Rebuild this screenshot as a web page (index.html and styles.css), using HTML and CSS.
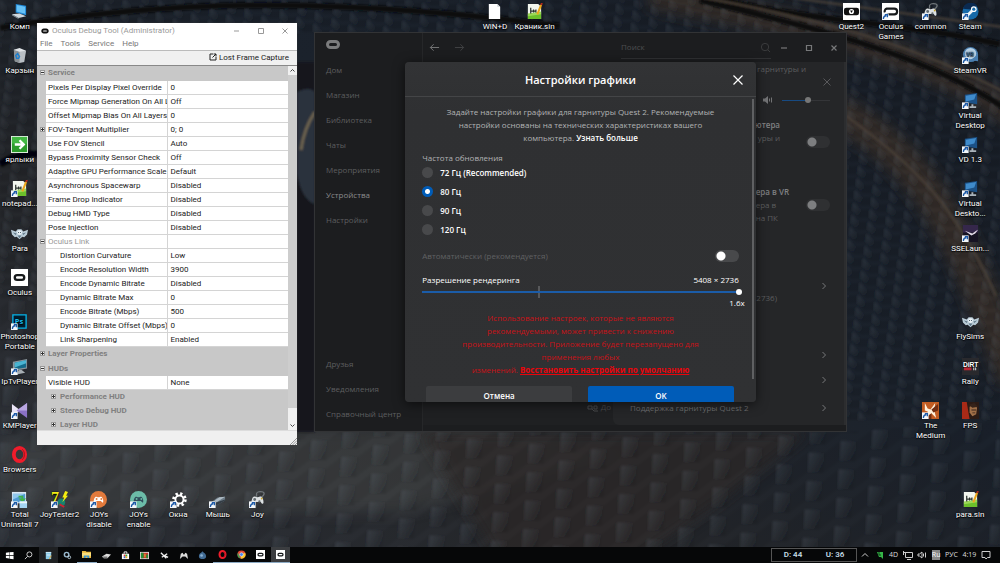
FILE: index.html
```html
<!DOCTYPE html>
<html lang="ru">
<head>
<meta charset="utf-8">
<meta name="viewport" content="width=device-width, initial-scale=1">
<title>Рабочий стол</title>
<link rel="stylesheet" href="styles.css">
</head>
<body>
<svg class="defs" aria-hidden="true">
  <symbol id="arrow" viewBox="0 0 18 18"><path fill="#f4f7fa" d="M0 11h7v7H0z"/><path fill="none" stroke="#1d5aa8" stroke-width="1.4" d="M1.500 17c0-2 1-3.500 3-3.500M3 12.300h2.700v2.900"/></symbol>
  <symbol id="i-pc" viewBox="0 0 18 18"><path fill="#1f88d8" d="M5 1l11 2v10L5 10z"/><path fill="#67c1f5" d="M6 2l9 2v7.500L6 9z"/><path fill="#cfd8de" d="M1 12l8-1 7 3-8 2z"/><path fill="#8d99a2" d="M1 12l7 4v1l-7-4z"/></symbol>
  <symbol id="i-bin" viewBox="0 0 18 18"><path fill="#b9bfc4" d="M3 3l13 1-2 12-5 1-5-2z"/><path fill="#8b9196" d="M3 3l6 2v12l-5-2z"/><path fill="#e1e5e8" d="M3 3l6-2 7 3-7 1z"/><path fill="none" stroke="#1b7fd0" stroke-width="1.500" d="M5 9l2-2 2 3-1 2H6z"/></symbol>
  <symbol id="i-green" viewBox="0 0 18 18"><path fill="#e5f1e5" d="M0 0h18v18H0z"/><path fill="#2c9c2c" d="M1 1h16v16H1z"/><path fill="#43b743" d="M1 1h16v7H1z"/><path fill="none" stroke="#fff" stroke-width="2.500" d="M4 9h9M9 4.500L13.500 9 9 13.500"/></symbol>
  <symbol id="i-sin" viewBox="0 0 18 18"><path fill="#f2f6ee" d="M2 1h11l3 3v13H2z"/><path fill="#6cc02b" d="M2 12l14-1v6H2z"/><path fill="#9bd957" d="M2 11l14-2v3L2 14z"/><path fill="none" stroke="#2b332d" stroke-width="1.300" d="M5 5v6M5 8.500h6M8 7v3M10.500 7v3"/><path stroke="#eba61c" stroke-width="2.200" d="M16 2l-4 10"/><path stroke="#b52b1e" stroke-width="2" d="M17 0l-1 2"/></symbol>
  <symbol id="i-wing" viewBox="0 0 18 18"><path fill="#b9cbd6" d="M0 5l5 2 2-2.500h4L13 7l5-2-1 5-3 3-2-.5L9 15l-3-2.500-2 .5-3-3z"/><path fill="#5d7484" d="M2 8l4 1-1 1.500zM16 8l-4 1 1 1.500zM7 11h4l-2 3z"/><circle cx="9" cy="8" r="2.500" fill="#ecf3f7"/><path fill="#415866" d="M7.500 7.500h1v1h-1zM9.500 7.500h1v1h-1z"/></symbol>
  <symbol id="i-oculus" viewBox="0 0 18 18"><path fill="#fff" d="M0 0h18v18H0z"/><rect x="4" y="6.500" width="10" height="5" rx="2.500" fill="none" stroke="#16191b" stroke-width="2.500"/></symbol>
  <symbol id="i-ps" viewBox="0 0 18 18"><path fill="#001d2e" stroke="#06b3e8" stroke-width="1.400" d="M2 2h14v14H2z"/><text x="4" y="12" class="svg-ps">Ps</text></symbol>
  <symbol id="i-tv" viewBox="0 0 18 18"><path fill="#89949b" d="M2 4l15-3v10L2 14z"/><path fill="#146a89" d="M4 5l12-2.500v7.500L4 12z"/><path fill="#4ab5d2" d="M4 5l12-2.500v3L4 10z"/><path fill="#a7aeb3" d="M8 13l3-.500 4 3-9 2z"/></symbol>
  <symbol id="i-km" viewBox="0 0 18 18"><path fill="#e9e4f5" d="M1 2l9 7-9 7z"/><path fill="#8a70c4" d="M17 1v16L6 9z"/><path fill="#b9a7e2" d="M17 1L6 9h11z"/></symbol>
  <symbol id="i-opera" viewBox="0 0 18 18"><ellipse cx="9" cy="9" rx="6" ry="7" fill="none" stroke="#ef1c2b" stroke-width="4"/><path fill="none" stroke="#9f1019" stroke-width="1" d="M12 3.500c3 3 3 8 0 11"/></symbol>
  <symbol id="i-total" viewBox="0 0 18 18"><path fill="#d9e7f2" d="M1 1h15v12H1z"/><path fill="#4f9ad2" d="M2 3h13v9H2z"/><path fill="#8fc7ec" d="M2 3h13L2 9z"/><path fill="#3fb14a" d="M8 5h5v3h3l-4 4-4-4h3V7H8z"/><path fill="#a4d4f3" d="M9 11h8v7H9z"/><path fill="#ecf6fb" d="M9 11h8v2H9z"/></symbol>
  <symbol id="i-seven" viewBox="0 0 18 18"><text x="0" y="13" class="svg-seven">7</text><circle cx="11" cy="12" r="4" fill="#18816d"/><path stroke="#cf2030" stroke-width="2" d="M9 14l5 3"/><path fill="#f5ee10" d="M15 0l3 1-2 4h2l-6 7 2-5h-2z"/></symbol>
  <symbol id="pad" viewBox="0 0 18 18"><path d="M4 5c2-1 2 .5 5 .5S12 4 14 5c2 1 3 6 2.500 8-.5 1.500-2 1-3.500-1.500H5C3.500 14 2 14.500 1.500 13 1 11 2 6 4 5z"/></symbol>
  <symbol id="i-joyd" viewBox="0 0 18 18"><circle cx="9" cy="9" r="9" fill="#e27a3c"/><use href="#pad" x="3" y="3" width="12" height="12" fill="#fff"/><circle cx="7" cy="8.500" r="1" fill="#e27a3c"/><circle cx="12" cy="8.500" r="1" fill="#e27a3c"/></symbol>
  <symbol id="i-joye" viewBox="0 0 18 18"><circle cx="9" cy="9" r="9" fill="#6cbca8"/><use href="#pad" x="3" y="3" width="12" height="12" fill="#304e5c"/><circle cx="7" cy="8.500" r="1" fill="#6cbca8"/><circle cx="12" cy="8.500" r="1" fill="#6cbca8"/></symbol>
  <symbol id="i-gear" viewBox="0 0 18 18"><circle cx="10" cy="9" r="6.200" fill="none" stroke="#fff" stroke-width="3" stroke-dasharray="2.400 2.470"/><circle cx="10" cy="9" r="4.300" fill="none" stroke="#fff" stroke-width="2"/></symbol>
  <symbol id="i-mouse" viewBox="0 0 18 18"><path fill="#6c7b86" d="M1 13l8-6 8-1v4L7 16z"/><path fill="#aebbc4" d="M6 10l5-3.500 6-.5-9 6z"/><path fill="#343d45" d="M2 14l15-5v1L7 16z"/></symbol>
  <symbol id="i-joy" viewBox="0 0 18 18"><path fill="none" stroke="#70767a" stroke-width="1.400" d="M8 6V3c0-3 8-3 8 0 0 2-2 2-3 4"/><use href="#pad" x="0" y="2" width="18" height="15" fill="#dde1e3"/><circle cx="6" cy="9" r="1.500" fill="#656d72"/><circle cx="11" cy="11" r="1.200" fill="#656d72"/><circle cx="13.500" cy="8" r="1" fill="#c5a431"/></symbol>
  <symbol id="i-doc" viewBox="0 0 18 18"><path fill="#fff" d="M3 1h9l3 3v13H3z"/><path fill="#cbd0d4" d="M12 1v3h3z"/></symbol>
  <symbol id="i-quest" viewBox="0 0 18 18"><path fill="#fff" d="M0 0h18v18H0z"/><rect x="1" y="5" width="16" height="8" rx="2.500" fill="#111"/><circle cx="9" cy="9" r="2.700" fill="#fff"/><path fill="#111" d="M7.500 8h3L9 10.500z"/></symbol>
  <symbol id="i-games" viewBox="0 0 18 18"><path fill="#fff" d="M0 0h18v18H0z"/><path fill="none" stroke="#16191b" stroke-width="2.300" d="M5 12H13a3 3 0 000-6H5a3 3 0 00-2 4"/></symbol>
  <symbol id="i-steam" viewBox="0 0 18 18"><circle cx="9" cy="9" r="8.500" fill="#176aa8"/><path fill="#0b2a50" d="M1 6a8.500 8.500 0 0115-3L9 7z"/><path fill="none" stroke="#eef4f8" stroke-width="3" d="M3 13l4-1 5-5"/><circle cx="12.500" cy="6.500" r="3" fill="#fff"/><circle cx="12.500" cy="6.500" r="1.700" fill="#176aa8"/></symbol>
  <symbol id="i-vr" viewBox="0 0 18 18"><circle cx="9" cy="8" r="8" fill="#4a7eaf"/><circle cx="9" cy="7" r="6" fill="#b8d2e6"/><text x="4.500" y="9.500" class="svg-vr">VR</text><path fill="#4a7eaf" d="M9 14l8-6v7z"/></symbol>
  <symbol id="i-vd" viewBox="0 0 18 18"><path fill="#1c5186" d="M3 3l13-2v12L3 11z"/><path fill="#3f8bcb" d="M4 4l11-2-2 6-9 2z"/><path fill="#a9b3bb" d="M10 13h2v2h3v2H8v-2h2z"/></symbol>
  <symbol id="i-sse" viewBox="0 0 18 18"><path fill="#171423" d="M1 0h16v18H1z"/><path fill="#35274b" d="M1 0h16v8H1z"/><path fill="#e3dbe8" d="M3 6l5 2 3 1 4-3 2-1-3 4-4 2-3-2z"/></symbol>
  <symbol id="i-dirt" viewBox="0 0 18 18"><path fill="#29292d" d="M0 0h18v18H0z"/><text x="1" y="10" class="svg-dirt">DiRT</text><path fill="#bb2836" d="M2 10h8v3H2z"/><path fill="#eee" d="M12 10h1v3h-1zM14 10h1v3h-1z"/></symbol>
  <symbol id="i-medium" viewBox="0 0 18 18"><path fill="#c25c22" d="M0 0h18v18H0z"/><path fill="#fff1dc" d="M3 1l3 6 3 1 5-7-1 8 2 8-5-5-3 3-1-5-3-1z"/><path fill="#712d12" d="M10 8l7-6v7l-5 2zM7 14l3-2v6H5z"/></symbol>
  <symbol id="i-fps" viewBox="0 0 18 18"><path fill="#2b1b15" d="M0 0h18v18H0z"/><path fill="#a92a17" d="M0 0h5l3 18H0z"/><path fill="#a07048" d="M8 5l5-2 3 3-1 7-4 2-3-4z"/><path fill="#35231a" d="M7 3l6-2 4 4-6 1zM10 8h5v1h-5zM11 11h3v1h-3z"/></symbol>
</svg>

<main class="desktop">
  <svg class="wallpaper" viewBox="0 0 1000 563" preserveAspectRatio="xMidYMid slice" aria-hidden="true">
    <defs>
      <linearGradient id="base" x1="0" y1="1" x2="1" y2="0"><stop offset="0" stop-color="#2f333a"/><stop offset=".35" stop-color="#25272b"/><stop offset=".6" stop-color="#1b222c"/><stop offset="1" stop-color="#181e27"/></linearGradient>
      <linearGradient id="facet" x1="0" y1="0" x2="1" y2="1"><stop offset="0" stop-color="#75818f" stop-opacity=".2"/><stop offset="1" stop-color="#000" stop-opacity=".14"/></linearGradient>
      <pattern id="large" width="34" height="26" patternUnits="userSpaceOnUse" patternTransform="rotate(-20) skewX(-24)"><path fill="url(#facet)" d="M0 0l17 6v18L0 18z"/><path fill="#000" opacity=".08" d="M17 6L34 0v18l-17 6z"/></pattern>
      <pattern id="small" width="18" height="12" patternUnits="userSpaceOnUse" patternTransform="rotate(22) skewX(14)"><path fill="url(#facet)" d="M0 0l9 4v8L0 8z"/><path fill="#000" opacity=".12" d="M9 4l9-4v8l-9 4z"/></pattern>
      <filter id="soft" x="-20%" y="-20%" width="140%" height="140%"><feGaussianBlur stdDeviation="7"/></filter>
      <filter id="edge"><feGaussianBlur stdDeviation="1.300"/></filter>
    </defs>
    <path fill="url(#base)" d="M0 0h1000v563H0z"/>
    <path fill="#46484a" opacity=".55" filter="url(#soft)" d="M0 440l440-15 190 30-230 58H0z"/>
    <path fill="#2f2c29" opacity=".8" filter="url(#soft)" d="M420 432h390l-90 70-90 61H500z"/>
    <g filter="url(#soft)" fill="none" stroke="#352f2a">
      <path stroke-width="26" d="M650-5c120 25 260 45 370 125"/>
      <path stroke-width="34" d="M835 110c90 50 120 110 180 270"/>
    </g>
    <g filter="url(#edge)" fill="none">
      <path fill="url(#small)" d="M300 0h700v420H847V33H300zM0 0h314v33H0zM0 0h38v300H0z"/>
      <path fill="url(#large)" d="M0 300h314v132h533l153-12v143H0z"/>
      <path stroke="#08090b" stroke-width="6" d="M0 28C160 0 330-4 560 26M710-4c90 26 180 24 290 48M700 0c120 30 230 55 310 112"/>
      <path stroke="#494037" stroke-width="2" d="M700-3c130 24 220 50 310 98M780-4l230 32M846 116c70 50 110 90 150 180"/>
      <path fill="#16191d" d="M295 62h20v370h-20z"/>
      <path fill="#2b323c" d="M297 92q12-6 18 0v112q-13-4-18-30z"/>
      <path stroke="#6d634f" stroke-width="3" d="M301 150q3-22 14-38"/>
      <path stroke="#050607" stroke-width="7" d="M0 164q20-12 40-10"/>
    </g>
  </svg>

  <nav class="icons" aria-label="Рабочий стол">
    <a class="icon c1 r1" href="#"><svg><use href="#i-pc"/></svg><span>Комп</span></a>
    <a class="icon c1 r2" href="#"><svg><use href="#i-bin"/></svg><span>Карзын</span></a>
    <a class="icon c1 r4" href="#"><svg><use href="#i-green"/></svg><span>ярлыки</span></a>
    <a class="icon c1 r5" href="#"><svg><use href="#i-sin"/><use href="#arrow"/></svg><span>notepad...</span></a>
    <a class="icon c1 r6" href="#"><svg><use href="#i-wing"/></svg><span>Para</span></a>
    <a class="icon c1 r7" href="#"><svg><use href="#i-oculus"/></svg><span>Oculus</span></a>
    <a class="icon c1 r8" href="#"><svg><use href="#i-ps"/><use href="#arrow"/></svg><span>Photoshop Portable</span></a>
    <a class="icon c1 r9" href="#"><svg><use href="#i-tv"/><use href="#arrow"/></svg><span>IpTvPlayer</span></a>
    <a class="icon c1 r10" href="#"><svg><use href="#i-km"/><use href="#arrow"/></svg><span>KMPlayer</span></a>
    <a class="icon c1 r11" href="#"><svg><use href="#i-opera"/></svg><span>Browsers</span></a>
    <a class="icon c1 r12" href="#"><svg><use href="#i-total"/><use href="#arrow"/></svg><span>Total<br>Uninstall 7</span></a>
    <a class="icon c2 r12" href="#"><svg><use href="#i-seven"/><use href="#arrow"/></svg><span>JoyTester2</span></a>
    <a class="icon c3 r12" href="#"><svg><use href="#i-joyd"/><use href="#arrow"/></svg><span>JOYs<br>disable</span></a>
    <a class="icon c4 r12" href="#"><svg><use href="#i-joye"/><use href="#arrow"/></svg><span>JOYs<br>enable</span></a>
    <a class="icon c5 r12" href="#"><svg><use href="#i-gear"/><use href="#arrow"/></svg><span>Окна</span></a>
    <a class="icon c6 r12" href="#"><svg><use href="#i-mouse"/><use href="#arrow"/></svg><span>Мышь</span></a>
    <a class="icon c7 r12" href="#"><svg><use href="#i-joy"/><use href="#arrow"/></svg><span>Joy</span></a>
    <a class="icon c13 r1" href="#"><svg><use href="#i-doc"/></svg><span>WiN+D</span></a>
    <a class="icon c14 r1" href="#"><svg><use href="#i-sin"/></svg><span>Краник.sin</span></a>
    <a class="icon c22 r1" href="#"><svg><use href="#i-quest"/></svg><span>Quest2</span></a>
    <a class="icon c23 r1" href="#"><svg><use href="#i-games"/><use href="#arrow"/></svg><span>Oculus<br>Games</span></a>
    <a class="icon c24 r1" href="#"><svg><use href="#i-joy"/><use href="#arrow"/></svg><span>common</span></a>
    <a class="icon c25 r1" href="#"><svg><use href="#i-steam"/><use href="#arrow"/></svg><span>Steam</span></a>
    <a class="icon c25 r2" href="#"><svg><use href="#i-vr"/><use href="#arrow"/></svg><span>SteamVR</span></a>
    <a class="icon c25 r3" href="#"><svg><use href="#i-vd"/><use href="#arrow"/></svg><span>Virtual<br>Desktop</span></a>
    <a class="icon c25 r4" href="#"><svg><use href="#i-vd"/><use href="#arrow"/></svg><span>VD 1.3</span></a>
    <a class="icon c25 r5" href="#"><svg><use href="#i-vd"/><use href="#arrow"/></svg><span>Virtual<br>Deskto...</span></a>
    <a class="icon c25 r6" href="#"><svg><use href="#i-sse"/><use href="#arrow"/></svg><span>SSELaun...</span></a>
    <a class="icon c25 r8" href="#"><svg><use href="#i-wing"/></svg><span>FlySims</span></a>
    <a class="icon c25 r9" href="#"><svg><use href="#i-dirt"/></svg><span>Rally</span></a>
    <a class="icon c24 r10" href="#"><svg><use href="#i-medium"/><use href="#arrow"/></svg><span>The<br>Medium</span></a>
    <a class="icon c25 r10" href="#"><svg><use href="#i-fps"/></svg><span>FPS</span></a>
    <a class="icon c25 r12" href="#"><svg><use href="#i-sin"/></svg><span>para.sin</span></a>
  </nav>

  <section class="debug" aria-label="Oculus Debug Tool">
    <header class="debug-title">
      <svg class="debug-logo" viewBox="0 0 8 6"><rect x="1.200" y="1.500" width="5.600" height="3" rx="1.500" fill="none" stroke="#111" stroke-width="1.800"/></svg>
      <h1>Oculus Debug Tool (Administrator)</h1>
      <button aria-label="Свернуть"><svg viewBox="0 0 8 8"><path d="M1 4h5"/></svg></button>
      <button aria-label="Развернуть"><svg viewBox="0 0 8 8"><path d="M1.500 1.500h5v5h-5z"/></svg></button>
      <button aria-label="Закрыть"><svg viewBox="0 0 8 8"><path d="M1.500 1.500l5 5m0-5l-5 5"/></svg></button>
    </header>
    <div class="menu"><button>File</button><button>Tools</button><button>Service</button><button>Help</button></div>
    <div class="toolbar"><button><svg viewBox="0 0 8 8"><path d="M4 1H1v6h6V4M4.500 1H7v2.500M7 1L3.500 4.500" fill="none" stroke="#222"/></svg>Lost Frame Capture</button></div>
    <div class="grid-wrap">
      <table class="props">
        <colgroup><col class="col-gutter"><col class="col-name"><col></colgroup>
        <tbody>
        <tr class="group"><td><i class="box"></i></td><th colspan="2">Service</th></tr>
        <tr><td></td><th>Pixels Per Display Pixel Override</th><td>0</td></tr>
        <tr><td></td><th>Force Mipmap Generation On All L</th><td>Off</td></tr>
        <tr><td></td><th>Offset Mipmap Bias On All Layers</th><td>0</td></tr>
        <tr><td><i class="box plus"></i></td><th>FOV-Tangent Multiplier</th><td>0; 0</td></tr>
        <tr><td></td><th>Use FOV Stencil</th><td>Auto</td></tr>
        <tr><td></td><th>Bypass Proximity Sensor Check</th><td>Off</td></tr>
        <tr><td></td><th>Adaptive GPU Performance Scale</th><td>Default</td></tr>
        <tr><td></td><th>Asynchronous Spacewarp</th><td>Disabled</td></tr>
        <tr><td></td><th>Frame Drop Indicator</th><td>Disabled</td></tr>
        <tr><td></td><th>Debug HMD Type</th><td>Disabled</td></tr>
        <tr><td></td><th>Pose Injection</th><td>Disabled</td></tr>
        <tr class="muted"><td><i class="box"></i></td><th>Oculus Link</th><td></td></tr>
        <tr class="sub"><td></td><th>Distortion Curvature</th><td>Low</td></tr>
        <tr class="sub"><td></td><th>Encode Resolution Width</th><td>3900</td></tr>
        <tr class="sub"><td></td><th>Encode Dynamic Bitrate</th><td>Disabled</td></tr>
        <tr class="sub"><td></td><th>Dynamic Bitrate Max</th><td>0</td></tr>
        <tr class="sub"><td></td><th>Encode Bitrate (Mbps)</th><td>500</td></tr>
        <tr class="sub"><td></td><th>Dynamic Bitrate Offset (Mbps)</th><td>0</td></tr>
        <tr class="sub"><td></td><th>Link Sharpening</th><td>Enabled</td></tr>
        <tr class="group"><td><i class="box plus"></i></td><th colspan="2">Layer Properties</th></tr>
        <tr class="group"><td><i class="box"></i></td><th colspan="2">HUDs</th></tr>
        <tr><td></td><th>Visible HUD</th><td>None</td></tr>
        <tr class="group nested"><td></td><th colspan="2"><i class="box plus"></i>Performance HUD</th></tr>
        <tr class="group nested"><td></td><th colspan="2"><i class="box plus"></i>Stereo Debug HUD</th></tr>
        <tr class="group nested"><td></td><th colspan="2"><i class="box plus"></i>Layer HUD</th></tr>
        </tbody>
      </table>
      <div class="scroll">
        <svg viewBox="0 0 9 9"><path d="M2.500 5.500l2-2 2 2"/></svg>
        <div class="thumb"></div>
        <svg viewBox="0 0 9 9"><path d="M2.500 3.500l2 2 2-2"/></svg>
      </div>
    </div>
    <footer class="status"><svg viewBox="0 0 8 8"><path d="M1 8l7-7M3.500 8L8 3.500M6 8l2-2"/></svg></footer>
  </section>

  <section class="app" aria-label="Oculus">
    <nav class="side">
      <svg class="app-logo" viewBox="0 0 14 9"><rect x="1.500" y="1.500" width="11" height="6" rx="3" fill="none" stroke="#7b7c7d" stroke-width="3"/></svg>
      <a href="#">Дом</a><a href="#">Магазин</a><a href="#">Библиотека</a><a href="#">Чаты</a><a href="#">Мероприятия</a><a class="current" href="#">Устройства</a><a href="#">Настройки</a>
      <a class="push" href="#">Друзья</a><a href="#">Уведомления</a><a href="#">Справочный центр</a>
    </nav>
    <div class="app-main">
      <header class="app-top">
        <button aria-label="Назад"><svg viewBox="0 0 12 12"><path stroke="#7a7b7c" d="M11 6H1.500M5 2.500L1.500 6 5 9.500"/></svg></button>
        <button aria-label="Вперёд"><svg viewBox="0 0 12 12"><path stroke="#434446" d="M1 6h9.500M7 2.500L10.500 6 7 9.500"/></svg></button>
        <label class="search"><input type="text" placeholder="Поиск" aria-label="Поиск"><svg viewBox="0 0 12 12"><circle cx="5.500" cy="5.500" r="4"/><path d="M8.500 8.500L11 11"/></svg></label>
        <div class="win-buttons">
          <button aria-label="Свернуть"><svg viewBox="0 0 8 8"><path d="M1 4h6"/></svg></button>
          <button aria-label="Развернуть"><svg viewBox="0 0 8 8"><path d="M1.500 1.500h5v5h-5z"/></svg></button>
          <button aria-label="Закрыть"><svg viewBox="0 0 8 8"><path d="M1.500 1.500l5 5m0-5l-5 5"/></svg></button>
        </div>
      </header>
      <div class="pages">
        <div class="list"><svg viewBox="0 0 12 8"><path d="M1 2h4v3H1zM7 2h3v3H7zM5 5l2 2h4"/></svg>До</div>
        <div class="device">
          <div class="line first"><p>гарнитуры и</p><button aria-label="Закрыть панель"><svg viewBox="0 0 10 10"><path d="M1.500 1.500l7 7m0-7l-7 7"/></svg></button></div>
          <div class="line volume"><svg viewBox="0 0 10 10"><path fill="#727375" d="M0 3.500h2L5 1v8L2 6.500H0z"/><path fill="none" stroke="#727375" d="M6.500 3.500v3M8.500 2.500v5"/></svg><input type="range" aria-label="Громкость" value="55"></div>
          <div class="line option"><p><strong>ютера</strong><br>уры и</p><input class="switch" type="checkbox" aria-label="Звук компьютера"></div>
          <div class="line option vr"><p><strong>ера в VR</strong><br>ера в<br>на ПК</p><input class="switch" type="checkbox" aria-label="Звук в VR"></div>
          <a class="line link tall" href="#"><span>2736)</span><svg viewBox="0 0 6 8"><path d="M1.500 1l3 3-3 3"/></svg></a>
          <a class="line link next" href="#" aria-label="Открыть"><svg viewBox="0 0 6 8"><path d="M1.500 1l3 3-3 3"/></svg></a>
          <a class="line link" href="#" aria-label="Открыть"><svg viewBox="0 0 6 8"><path d="M1.500 1l3 3-3 3"/></svg></a>
          <a class="line support" href="#"><span>Поддержка гарнитуры Quest 2</span><svg viewBox="0 0 6 8"><path d="M1.500 1l3 3-3 3"/></svg></a>
        </div>
      </div>
    </div>

    <div class="modal" role="dialog" aria-labelledby="dlg">
      <header><h2 id="dlg">Настройки графики</h2><button aria-label="Закрыть"><svg viewBox="0 0 12 12"><path d="M1.500 1.500l9 9m0-9l-9 9"/></svg></button></header>
      <div class="modal-body">
        <p class="intro">Задайте настройки графики для гарнитуры Quest 2. Рекомендуемые<br>настройки основаны на технических характеристиках вашего<br>компьютера. <a href="#">Узнать больше</a></p>
        <fieldset>
          <legend>Частота обновления</legend>
          <label><input type="radio" name="hz">72 Гц (Recommended)</label>
          <label><input type="radio" name="hz" checked>80 Гц</label>
          <label><input type="radio" name="hz">90 Гц</label>
          <label><input type="radio" name="hz">120 Гц</label>
        </fieldset>
        <label class="auto"><span>Автоматически (рекомендуется)</span><input class="switch bright" type="checkbox"></label>
        <div class="res"><label for="res">Разрешение рендеринга</label><output for="res">5408 × 2736</output></div>
        <div class="range"><input id="res" type="range" value="100"></div>
        <p class="factor">1.6x</p>
        <p class="warn">Использование настроек, которые не являются<br>рекомендуемыми, может привести к снижению<br>производительности. Приложение будет перезапущено для<br>применения любых<br>изменений. <a href="#">Восстановить настройки по умолчанию</a></p>
        <div class="actions"><button>Отмена</button><button class="primary">OK</button></div>
      </div>
    </div>
  </section>

  <footer class="taskbar">
    <div class="tasks">
      <button aria-label="Пуск"><svg viewBox="0 0 10 10"><path fill="#fff" d="M1 2l3.500-.5v3H1zM5 1.400L9.500 1v3.500H5zM1 5.200h3.500v3L1 7.800zM5 5.200h4.500v4L5 8.500z"/></svg></button>
      <button aria-label="Поиск"><svg viewBox="0 0 10 10"><circle cx="6" cy="3.800" r="2.800" fill="none" stroke="#ddd"/><path stroke="#ddd" d="M4 6L1 9"/></svg></button>
      <button class="lit" aria-label="Блокнот"><svg viewBox="0 0 10 10"><path fill="#8ccbe7" d="M2 1h6v8H2z"/><path fill="#d9eef7" d="M2 1h6v1H2zM3 4h4v1H3z"/><path stroke="#e0a437" d="M8 5L6 9"/></svg></button>
      <button aria-label="Настройки"><svg viewBox="0 0 10 10"><circle cx="4" cy="4" r="2.500" fill="none" stroke="#98b8ce" stroke-width="1.600"/><circle cx="7" cy="7" r="1.500" fill="none" stroke="#bdd2df"/></svg></button>
      <button class="open" aria-label="Проводник"><svg viewBox="0 0 10 10"><path fill="#eab63a" d="M0 1h4l1 1h5v7H0z"/><path fill="#fbdd7b" d="M0 3h10v4H0z"/><path fill="#3a94cf" d="M2 6h6v3H6V7.500H4V9H2z"/></svg></button>
      <button aria-label="Диск"><svg viewBox="0 0 10 10"><path fill="#ddd" d="M0 6l5-3 5 1-4 4H2z"/><path fill="#777" d="M0 6h6v2H2z"/></svg></button>
      <button aria-label="Магазин"><svg viewBox="0 0 10 10"><path fill="#fff" d="M1 3h8v6H1z"/><path fill="none" stroke="#fff" d="M3.500 3V1h3v2"/><path fill="#e33" d="M3 4h2v2H3z"/><path fill="#3a3" d="M5 4h2v2H5z"/><path fill="#36c" d="M3 6h2v2H3z"/><path fill="#ea2" d="M5 6h2v2H5z"/></svg></button>
      <button aria-label="Монитор"><svg viewBox="0 0 10 10"><path fill="#ddd" d="M0 1h10v8H0z"/><path fill="#c8302c" d="M1 2h8v6H1z"/><path fill="#238f35" d="M1 2h3v6H1zM7 4h2v4H7z"/><path fill="#f2ca37" d="M5 3h1v4H5z"/></svg></button>
      <button aria-label="Симулятор"><svg viewBox="0 0 10 10"><path stroke="#eee" stroke-width="1.500" d="M1 2l6 6M2 7l6-4M5 5l4 2"/></svg></button>
      <button aria-label="Геймпад"><svg viewBox="0 0 10 10"><path fill="#ddd" d="M1 9l1-6 2-1 1 2h1l1-2 2 1 1 6-3-3H4z"/></svg></button>
      <button aria-label="Капля"><svg viewBox="0 0 10 10"><path fill="#416b94" d="M5 0c0 2 4 2 4 6s-8 4-8 0 4-4 4-6"/><circle cx="4" cy="5" r="1.500" fill="#8ab0d0"/></svg></button>
      <button class="open" aria-label="Opera"><svg><use href="#i-opera"/></svg></button>
      <button class="open" aria-label="Chrome"><svg viewBox="0 0 10 10"><circle cx="5" cy="5" r="4.500" fill="#e24a37"/><path fill="#3aa757" d="M1 3l3 6.500A4.500 4.500 0 011 3"/><path fill="#f9c62e" d="M5 5l4-2a4.500 4.500 0 01-5 6.500z"/><circle cx="5" cy="5" r="2" fill="#4285f4" stroke="#fff" stroke-width=".6"/></svg></button>
      <button class="open" aria-label="Oculus"><svg><use href="#i-oculus"/></svg></button>
      <button class="open lit active" aria-label="Oculus Debug Tool"><svg><use href="#i-oculus"/></svg></button>
    </div>
    <div class="meter"><span>D: 44</span><span>U: 36</span></div>
    <div class="tray">
      <svg viewBox="0 0 10 10"><path d="M2 6.500l3-3 3 3"/></svg>
      <svg viewBox="0 0 10 10"><path fill="#35b548" stroke="none" d="M2 2h6v7L6 7H4z"/><path stroke="#103f17" d="M4 2v3h2"/></svg>
      <span>4D</span>
      <svg viewBox="0 0 10 10"><path d="M2.500 2.500h7v5h-7zM4 9.500h4M.5 1v4M0 2.500h3"/></svg>
      <svg viewBox="0 0 10 10"><path d="M1 4h1.500L5 2v6L2.500 6H1zM6.500 3.500v3M8.500 2.500v5"/></svg>
      <span class="ru">Ru</span>
      <span>РУС</span>
      <time>4:19</time>
      <svg viewBox="0 0 10 10"><path d="M1 1.500h8v6H6.500L5 9 4 7.500H1z"/></svg>
    </div>
  </footer>
</main>
</body>
</html>
```
FILE: styles.css
```css
* { box-sizing: border-box; }
body { margin: 0; background: #1b2028; font-family: "Open Sans", "Noto Sans", sans-serif; font-size: 8px; line-height: 10px; }
button, input { font: inherit; color: inherit; border: 0; padding: 0; margin: 0; background: none; }
a { color: inherit; text-decoration: none; }
p, h1, h2 { margin: 0; font-size: inherit; font-weight: 400; }
svg { display: block; flex: none; }
.defs { position: absolute; width: 0; height: 0; }
.svg-ps { font: bold 8px "Open Sans", sans-serif; fill: #19bef0; }
.svg-seven { font: bold 17px "Liberation Serif", serif; fill: #f2ec16; }
.svg-vr { font: bold 6px "Open Sans", sans-serif; fill: #335f8a; }
.svg-dirt { font: bold 7px "Liberation Sans", sans-serif; fill: #fff; }

.desktop { position: relative; min-height: 100vh; overflow: hidden; display: flex; flex-direction: column; }
.wallpaper { position: absolute; inset: 0; width: 100%; height: 100%; }

.icons { position: relative; flex: 1; display: grid; grid-template-columns: repeat(25, minmax(0, 1fr)); grid-template-rows: repeat(12, minmax(0, 1fr)); padding: 3px 10px 12px 0; color: #fff; font-family: Roboto, "Open Sans", sans-serif; }
.icon { display: flex; flex-direction: column; align-items: center; text-align: center; text-shadow: 0 1px 1px #000, 0 0 2px #000; }
.icon svg { width: 17px; height: 17px; }
.icon span { margin-top: 2px; }
.c1 { grid-column: 1; } .c2 { grid-column: 2; } .c3 { grid-column: 3; } .c4 { grid-column: 4; } .c5 { grid-column: 5; } .c6 { grid-column: 6; } .c7 { grid-column: 7; }
.c13 { grid-column: 13; } .c14 { grid-column: 14; } .c22 { grid-column: 22; } .c23 { grid-column: 23; } .c24 { grid-column: 24; } .c25 { grid-column: 25; }
.r1 { grid-row: 1; } .r2 { grid-row: 2; } .r3 { grid-row: 3; } .r4 { grid-row: 4; } .r5 { grid-row: 5; } .r6 { grid-row: 6; }
.r7 { grid-row: 7; } .r8 { grid-row: 8; } .r9 { grid-row: 9; } .r10 { grid-row: 10; } .r11 { grid-row: 11; } .r12 { grid-row: 12; }

/* Debug tool window */
.debug { position: absolute; left: 3.7%; top: 23px; width: 26%; background: #fff; color: #222; box-shadow: 0 0 1px #444; font-family: Roboto, "Open Sans", sans-serif; }
.debug-title { display: flex; align-items: center; height: 15px; padding-left: 4px; color: #999; }
.debug-title h1 { flex: 1; padding-left: 3px; }
.debug-title button { width: 24px; display: flex; justify-content: center; }
.debug-title button svg { width: 8px; height: 8px; fill: none; stroke: #999; }
.debug-logo { width: 8px; height: 6px; }
.menu { display: flex; gap: 8px; height: 12px; padding-left: 3px; color: #777; }
.toolbar { display: flex; justify-content: flex-end; align-items: center; height: 16px; padding-right: 8px; background: #f0f0f0; border-top: 1px solid #bbb; border-bottom: 1px solid #888; }
.toolbar button { display: flex; gap: 2px; }
.toolbar svg { width: 8px; height: 8px; }
.grid-wrap { display: flex; height: 365px; overflow: hidden; border-bottom: 1px solid #ddd; }
.props { flex: 1; width: 100%; min-width: 0; height: 366px; table-layout: fixed; border-collapse: collapse; }
.col-gutter { width: 9px; }
.col-name { width: 121px; }
.props th, .props td { padding: 0 0 0 3px; font-weight: 400; text-align: left; line-height: 13px; height: 14px; white-space: nowrap; overflow: hidden; border-bottom: 1px solid #d4d4d4; }
.props th { padding-left: 2px; border-right: 1px solid #d4d4d4; }
.props td:first-child, .props .group td, .props .group th { background: #c8c8c8; border-color: #c8c8c8; }
.props .group th { font-weight: 700; color: #808080; }
.props .muted th { color: #999; }
.props .sub th { padding-left: 14px; }
.props .nested th { padding-left: 5px; }
.nested .box { margin-right: 4px; }
.box { display: inline-block; width: 5px; height: 5px; border: 1px solid #999; background: linear-gradient(#333, #333) center / 3px 1px no-repeat #eee; }
.box.plus { background: linear-gradient(#333, #333) center / 3px 1px no-repeat, linear-gradient(#333, #333) center / 1px 3px no-repeat #eee; }
.scroll { width: 9px; flex: none; display: flex; flex-direction: column; background: #f0f0f0; }
.scroll svg { height: 9px; fill: none; stroke: #444; }
.thumb { flex: 1; margin-bottom: 13px; background: #cdcdcd; }
.status { display: flex; justify-content: flex-end; align-items: flex-end; height: 14px; background: #f0f0f0; }
.status svg { width: 8px; height: 8px; stroke: #999; }

/* Headset application */
.app { position: absolute; left: 31.4%; top: 32px; width: 53.3%; display: grid; grid-template-columns: 108px 1fr; height: 400px; background: #1c1d1f; border: 1px solid #323335; color: #5c5d5f; }
.side { display: flex; flex-direction: column; gap: 15px; padding: 7px 0 12px 11px; border-right: 1px solid #262729; }
.app-logo { width: 14px; height: 9px; margin-bottom: 1px; }
.side .current { color: #8a8b8d; }
.side .push { margin-top: auto; }
.app-main { display: flex; flex-direction: column; min-width: 0; }
.app-top { display: flex; align-items: center; height: 29px; padding-left: 6px; }
.app-top > button { width: 25px; }
.app-top svg { width: 11px; height: 11px; fill: none; }
.search { display: flex; flex: 1; align-items: center; max-width: 150px; margin-left: auto; border-bottom: 1px solid #303133; height: 22px; }
.search input { flex: 1; min-width: 0; }
.search input::placeholder { color: #4c4d4f; }
.search svg { stroke: #3d3e40; }
.win-buttons { display: flex; }
.win-buttons button { width: 25px; display: flex; justify-content: center; }
.win-buttons svg { width: 8px; height: 8px; stroke: #77787a; stroke-width: 1.2; }
.pages { flex: 1; display: flex; margin-bottom: 6px; background: #1f2022; }
.list { flex: 0 0 190px; display: flex; justify-content: flex-end; align-items: flex-end; gap: 2px; padding: 0 2px 13px; color: #48494b; }
.list svg { width: 12px; height: 8px; fill: none; stroke: #48494b; }
.device { flex: 1; display: flex; flex-direction: column; background: #252628; border-radius: 0 0 0 6px; border-right: 2px solid #2c2d2f; }
.line { display: flex; flex: none; align-items: center; justify-content: flex-end; padding-right: 14px; }
.line p { line-height: 13px; margin-right: 26px; }
.line strong { color: #808183; font-weight: 600; }
.first { padding-right: 12px; align-items: flex-start; }
.first p { margin-right: 16px; }
.first button { margin-top: 15px; }
.first svg { width: 10px; height: 10px; stroke: #59595c; }
.volume { gap: 9px; height: 26px; margin-bottom: 5px; }
.volume svg { width: 10px; height: 10px; }
.volume input { appearance: none; width: 48px; height: 10px; background: linear-gradient(90deg, #174a82 55%, #343538 55%) center / 100% 1px no-repeat; }
.volume input::-webkit-slider-thumb { appearance: none; width: 6px; height: 6px; border-radius: 50%; background: #777; }
.option { height: 48px; align-items: flex-start; text-align: right; }
.option .switch { margin-top: 18px; }
.vr { height: 77px; padding-top: 19px; text-align: left; }
.vr p { margin-right: 17px; }
.vr .switch { margin-top: 14px; }
.switch { appearance: none; width: 24px; height: 12px; border-radius: 6px; background: radial-gradient(circle at 6px 6px, #7d7e80 4px, transparent 5px) #2f3032; }
.bright { background: radial-gradient(circle at 6px 6px, #fff 4px, transparent 5px) #48494b; }
.link { height: 25px; }
.link svg, .support svg { width: 6px; height: 8px; margin-right: 3px; fill: none; stroke: #77787a; }
.tall { margin-top: 30px; }
.tall span { margin: 25px 44px 0 0; }
.next { margin-top: 44px; }
.support { justify-content: space-between; height: 31px; padding-left: 17px; color: #6c6d6f; }

/* Graphics settings dialog */
.modal { position: absolute; left: 17%; top: 29px; width: 66%; height: 340px; overflow: hidden; border-radius: 4px; background: linear-gradient(#323335, #2f3032 15%, #303133); color: #b2b3b4; box-shadow: 0 2px 12px #0009; }
.modal header { display: flex; align-items: center; height: 35px; border-bottom: 1px solid #444547; padding: 2px 12px 0 24px; color: #fff; }
.modal h2 { flex: 1; text-align: center; font-size: 11px; font-weight: 600; }
.modal header svg { width: 12px; height: 12px; stroke: #fff; stroke-width: 1.2; }
.modal-body { margin-right: 2px; padding: 8px 13px 0 17px; border-right: 2px solid; border-image: linear-gradient(transparent 1%, #5f6062 1% 91%, transparent 91%) 1; }
.intro, .warn { text-align: center; line-height: 13px; }
.intro a { color: #fff; font-weight: 600; }
fieldset { margin: 9px 0 0; padding: 0; border: 0; display: flex; flex-direction: column; color: #fff; font-weight: 600; }
legend { padding: 0; font-weight: 400; color: #b2b3b4; }
fieldset label { display: flex; align-items: center; gap: 7px; height: 19px; }
fieldset input { appearance: none; width: 11px; height: 11px; border-radius: 50%; background: #48494b; }
fieldset input:checked { background: radial-gradient(#fff 2px, #005cb8 3px); }
.auto { display: flex; justify-content: space-between; align-items: center; height: 12px; margin-top: 11px; color: #606163; }
.res { display: flex; justify-content: space-between; margin-top: 13px; color: #fff; }
.range { display: flex; margin-right: -3px; background: linear-gradient(#58595b, #58595b) 116px center / 2px 12px no-repeat; }
.range input { appearance: none; width: 100%; height: 13px; background: linear-gradient(#1b5ca8, #1b5ca8) center / 100% 2px no-repeat; }
.range input::-webkit-slider-thumb { appearance: none; width: 6px; height: 6px; border-radius: 50%; background: #fff; }
.factor { text-align: right; color: #fff; margin-right: -6px; }
.warn { margin-top: 3px; color: #c81218; }
.warn a { color: #e8050c; font-weight: 700; text-decoration: underline; }
.actions { display: flex; gap: 16px; padding: 10px 5px 0 4px; }
.actions button { flex: 1; height: 20px; border-radius: 2px; background: #3c3d3f; color: #fff; font-weight: 600; }
.actions .primary { background: #005cb8; }

/* Taskbar */
.taskbar { position: relative; display: flex; height: 16px; background: #060708; color: #ddd; }
.tasks { display: flex; width: 29%; }
.tasks button { flex: 1; display: flex; justify-content: center; align-items: center; }
.tasks svg { width: 9px; height: 9px; }
.lit { background: #1f2123; }
.tasks .active { background: #3b3d40; }
.tasks .open { border-bottom: 1px solid #8dabc5; }
.meter { display: flex; justify-content: space-around; align-items: center; width: 86px; margin: 1px 0 1px auto; border: 1px solid #555; color: #c5dce6; font-family: Roboto, sans-serif; font-weight: 600; }
.tray { display: flex; align-items: center; justify-content: space-between; width: 131px; margin: 0 9px 0 3px; font-size: 7px; }
.tray svg { width: 10px; height: 10px; fill: none; stroke: #ccc; }
.ru { background: #888; color: #fff; }
```
